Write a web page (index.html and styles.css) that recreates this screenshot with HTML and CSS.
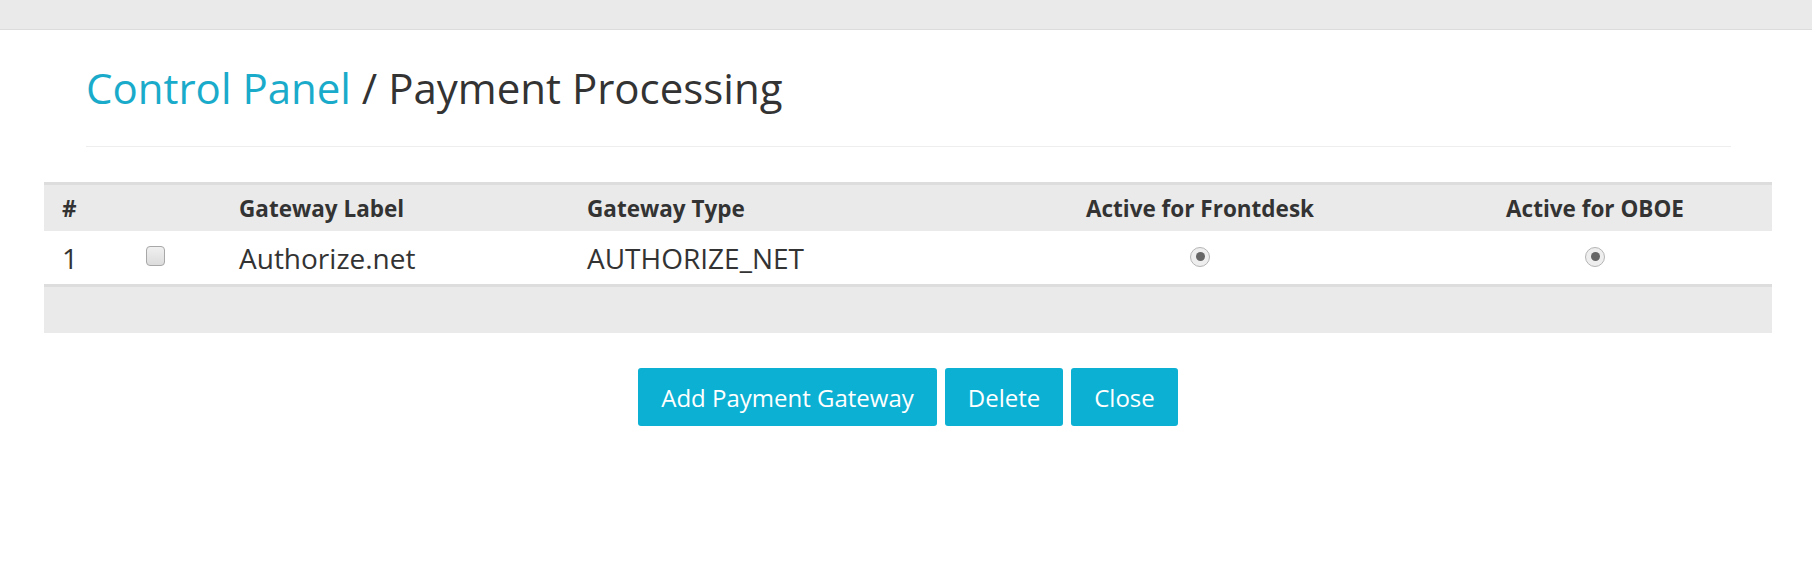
FILE: index.html
```html
<!DOCTYPE html>
<html>
<head>
<meta charset="utf-8">
<link rel="stylesheet" href="styles.css">
</head>
<body>
<div class="topbar"></div>
<div class="page">
  <div class="page-header">
    <h1 class="title"><a class="crumb" href="#">Control Panel</a> / Payment Processing</h1>
  </div>
  <table class="grid">
    <colgroup>
      <col style="width:84px">
      <col style="width:93px">
      <col style="width:348px">
      <col style="width:413px">
      <col style="width:436px">
      <col style="width:354px">
    </colgroup>
    <thead>
      <tr>
        <th>#</th>
        <th></th>
        <th>Gateway Label</th>
        <th>Gateway Type</th>
        <th class="center">Active for Frontdesk</th>
        <th class="center">Active for OBOE</th>
      </tr>
    </thead>
    <tbody>
      <tr>
        <td>1</td>
        <td><span class="check"></span></td>
        <td>Authorize.net</td>
        <td>AUTHORIZE_NET</td>
        <td class="center"><span class="radio"></span></td>
        <td class="center"><span class="radio"></span></td>
      </tr>
    </tbody>
    <tfoot>
      <tr><td colspan="6"></td></tr>
    </tfoot>
  </table>
  <div class="actions">
    <button class="btn">Add Payment Gateway</button>
    <button class="btn">Delete</button>
    <button class="btn">Close</button>
  </div>
</div>
</body>
</html>
```
FILE: styles.css
```css
html, body {
  margin: 0;
  padding: 0;
  background: #ffffff;
}
body {
  font-family: "Open Sans", "Liberation Sans", sans-serif;
  color: #333333;
}
.topbar {
  height: 29px;
  background: #eaeaea;
  border-bottom: 1px solid #dcdcdc;
}
.page {
  padding: 0 40px 0 44px;
}
.page-header {
  margin: 0 41px 0 42px;
  padding-bottom: 35px;
  border-bottom: 1px solid #eeeeee;
}
.title {
  margin: 0;
  padding-top: 35px;
  font-size: 42px;
  line-height: 46px;
  font-weight: 400;
  color: #333333;
}
.crumb {
  color: #1aabcb;
  text-decoration: none;
}
.grid {
  margin-top: 35px;
  width: 100%;
  table-layout: fixed;
  border-collapse: collapse;
  border-top: 3px solid #dddddd;
}
.grid th {
  background: #eaeaea;
  height: 46px;
  padding: 0 0 0 18px;
  text-align: left;
  font-size: 22.5px;
  font-weight: 700;
  color: #333333;
  vertical-align: middle;
  white-space: nowrap;
}
.grid td {
  height: 53px;
  padding: 0 0 0 18px;
  font-size: 28px;
  vertical-align: middle;
}
.grid .center {
  text-align: center;
  padding: 0;
}
.grid tfoot td {
  height: 46px;
  background: #eaeaea;
  border-top: 3px solid #dddddd;
}
.check {
  display: inline-block;
  width: 17px;
  height: 18px;
  border: 1px solid #a8a8a8;
  border-radius: 4px;
  background: linear-gradient(#f0f0f0, #dcdcdc);
  vertical-align: 3px;
}
.radio {
  display: inline-block;
  position: relative;
  width: 18px;
  height: 18px;
  border: 1px solid #b5b5b5;
  border-radius: 50%;
  background: #eeeeee;
  vertical-align: 2px;
}
.radio::after {
  content: "";
  position: absolute;
  left: 4.5px;
  top: 4.5px;
  width: 9px;
  height: 9px;
  border-radius: 50%;
  background: #666666;
}
.actions {
  display: flex;
  justify-content: center;
  gap: 8px;
  margin-top: 35px;
}
.btn {
  height: 58px;
  padding: 0 23px;
  border: 0;
  border-radius: 3px;
  background: #0cb0d3;
  color: #ffffff;
  font-family: "Open Sans", "Liberation Sans", sans-serif;
  font-size: 24px;
}
```
